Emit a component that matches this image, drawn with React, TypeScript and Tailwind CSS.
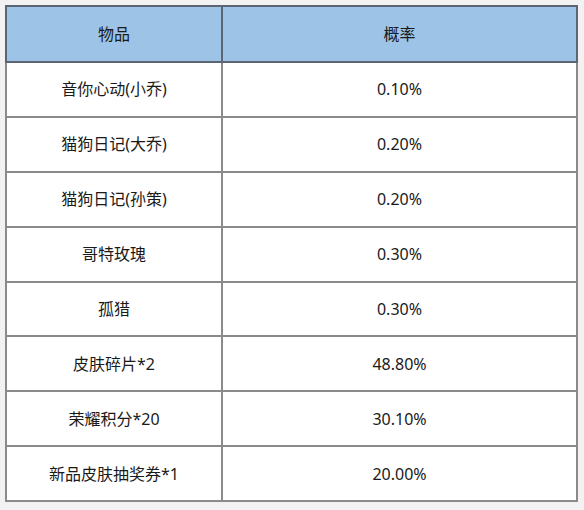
import React from 'react';

const rows: [string, string][] = [
  ['音你心动(小乔)', '0.10%'],
  ['猫狗日记(大乔)', '0.20%'],
  ['猫狗日记(孙策)', '0.20%'],
  ['哥特玫瑰', '0.30%'],
  ['孤猎', '0.30%'],
  ['皮肤碎片*2', '48.80%'],
  ['荣耀积分*20', '30.10%'],
  ['新品皮肤抽奖券*1', '20.00%'],
];

export default function App() {
  return (
    <div
      className="w-[584px] h-[510px] bg-[#f2f2f2] pt-[5px] pl-[5px] text-[#1a1a1a] text-[16px]"
      style={{ fontFamily: '"Noto Sans", "Noto Sans CJK SC", sans-serif' }}
    >
      <table className="w-[573px] border-collapse bg-white">
        <thead>
          <tr className="h-[56px] bg-[#9dc3e6]">
            <th className="w-[216px] border-2 border-[#5b6573] font-normal text-center">物品</th>
            <th className="border-2 border-[#5b6573] font-normal text-center">概率</th>
          </tr>
        </thead>
        <tbody>
          {rows.map(([name, rate]) => (
            <tr key={name} className="h-[54.9px]">
              <td className="border-2 border-[#8a8a8a] text-center">{name}</td>
              <td className="border-2 border-[#8a8a8a] text-center">{rate}</td>
            </tr>
          ))}
        </tbody>
      </table>
    </div>
  );
}
